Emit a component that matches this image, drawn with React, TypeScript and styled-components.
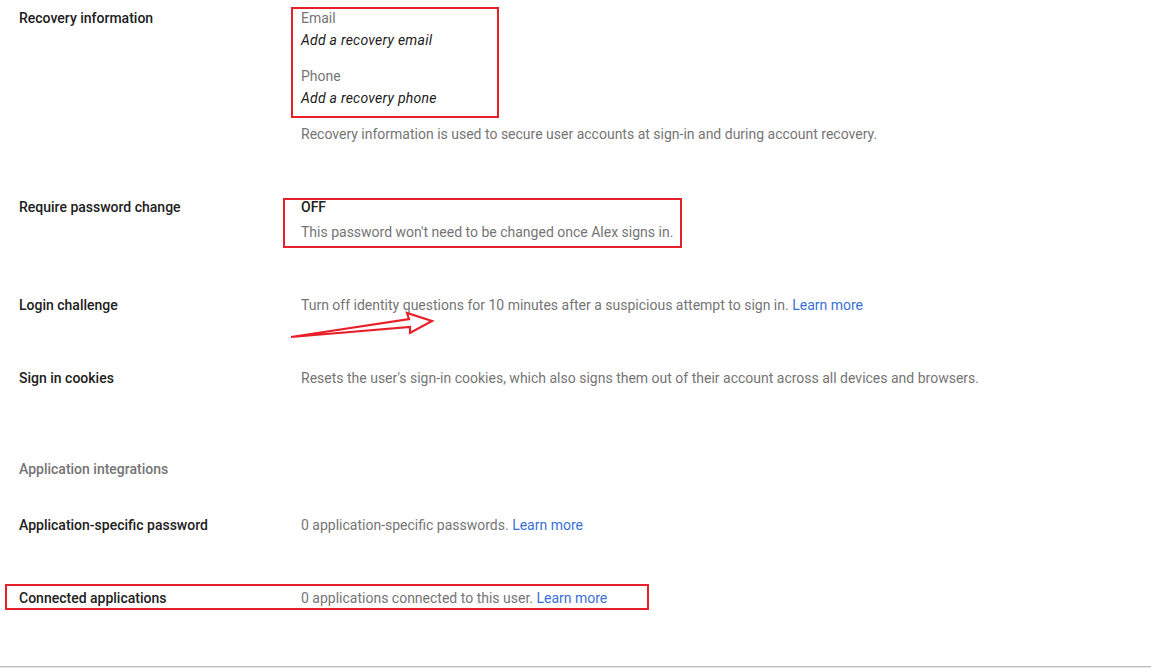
import React from "react";
import styled, { createGlobalStyle } from "styled-components";

const Global = createGlobalStyle`
  html, body { margin: 0; padding: 0; background: #fff; }
  body { font-family: Roboto, "Noto Sans", Arial, sans-serif; font-size: 14px; }
`;

const Page = styled.div`
  position: relative;
  width: 1151px;
  height: 670px;
  box-sizing: border-box;
  padding: 7px 0 0 19px;
  overflow: hidden;
`;

const Row = styled.div<{ $gap?: number }>`
  display: grid;
  grid-template-columns: 282px 1fr;
  margin-top: ${(p) => (p.$gap ?? 51)}px;
  &:first-child { margin-top: 0; }
`;

const Label = styled.div`
  font-weight: 500;
  color: #212121;
  line-height: 22px;
`;

const SectionTitle = styled.div`
  font-weight: 500;
  color: #757575;
  line-height: 22px;
`;

const Value = styled.div`
  display: flex;
  flex-direction: column;
`;

const Line = styled.div<{ $mt?: number }>`
  color: #757575;
  line-height: 22px;
  margin-top: ${(p) => p.$mt ?? 0}px;
`;

const Italic = styled.div`
  font-style: italic;
  color: #212121;
  line-height: 22px;
  letter-spacing: 0.25px;
`;

const Strong = styled.div`
  font-weight: 500;
  color: #212121;
  line-height: 22px;
`;

const Link = styled.a`
  color: #3b6fd8;
  text-decoration: none;
`;

const BottomRule = styled.div`
  position: absolute;
  left: 0;
  right: 0;
  top: 666px;
  height: 1px;
  background: #bdbdbd;
  border-bottom: 1px solid #e6e6e6;
`;

const Box = styled.div`
  position: absolute;
  border: 2px solid #e8202a;
  box-sizing: border-box;
  pointer-events: none;
`;

const Arrow = styled.svg`
  position: absolute;
  left: 0;
  top: 0;
  pointer-events: none;
`;

export default function App() {
  return (
    <>
      <Global />
      <Page>
        <Row>
          <Label>Recovery information</Label>
          <Value>
            <Line>Email</Line>
            <Italic>Add a recovery email</Italic>
            <Line $mt={14}>Phone</Line>
            <Italic>Add a recovery phone</Italic>
            <Line $mt={14}>
              Recovery information is used to secure user accounts at sign-in and during account recovery.
            </Line>
          </Value>
        </Row>
        <Row>
          <Label>Require password change</Label>
          <Value>
            <Strong>OFF</Strong>
            <Line $mt={3}>This password won't need to be changed once Alex signs in.</Line>
          </Value>
        </Row>
        <Row>
          <Label>Login challenge</Label>
          <Line>
            Turn off identity questions for 10 minutes after a suspicious attempt to sign in.{" "}
            <Link href="#">Learn more</Link>
          </Line>
        </Row>
        <Row>
          <Label>Sign in cookies</Label>
          <Line>
            Resets the user's sign-in cookies, which also signs them out of their account across all devices and browsers.
          </Line>
        </Row>
        <Row $gap={69}>
          <SectionTitle>Application integrations</SectionTitle>
        </Row>
        <Row $gap={34}>
          <Label>Application-specific password</Label>
          <Line>
            0 application-specific passwords. <Link href="#">Learn more</Link>
          </Line>
        </Row>
        <Row>
          <Label>Connected applications</Label>
          <Line>
            0 applications connected to this user. <Link href="#">Learn more</Link>
          </Line>
        </Row>

        <Box style={{ left: 291, top: 7, width: 208, height: 111 }} />
        <Box style={{ left: 283, top: 198, width: 399, height: 50 }} />
        <Box style={{ left: 5, top: 584, width: 644, height: 26 }} />
        <Arrow width="1151" height="670" viewBox="0 0 1151 670">
          <polygon
            points="291,337 409,319 407,313 432,321 410,333 410,327"
            fill="none"
            stroke="#e8202a"
            strokeWidth="2.2"
            strokeLinejoin="miter"
          />
        </Arrow>
        <BottomRule />
      </Page>
    </>
  );
}
